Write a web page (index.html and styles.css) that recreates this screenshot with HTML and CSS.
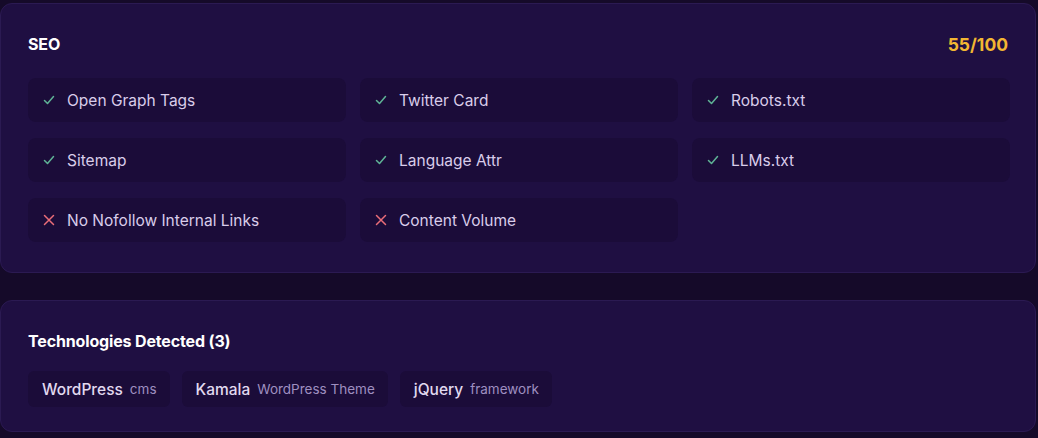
FILE: index.html
```html
<!DOCTYPE html>
<html>
<head>
<meta charset="utf-8">
<link rel="stylesheet" href="styles.css">
</head>
<body>
<div class="page">
  <section class="card">
    <div class="card-head">
      <h2 class="title">SEO</h2>
      <span class="score">55/100</span>
    </div>
    <div class="checks">
      <div class="check"><svg class="ic ok" viewBox="0 0 12 12"><path d="M1.5 6.5 L4.5 9.5 L10.5 2.5"/></svg><span>Open Graph Tags</span></div>
      <div class="check"><svg class="ic ok" viewBox="0 0 12 12"><path d="M1.5 6.5 L4.5 9.5 L10.5 2.5"/></svg><span>Twitter Card</span></div>
      <div class="check"><svg class="ic ok" viewBox="0 0 12 12"><path d="M1.5 6.5 L4.5 9.5 L10.5 2.5"/></svg><span>Robots.txt</span></div>
      <div class="check"><svg class="ic ok" viewBox="0 0 12 12"><path d="M1.5 6.5 L4.5 9.5 L10.5 2.5"/></svg><span>Sitemap</span></div>
      <div class="check"><svg class="ic ok" viewBox="0 0 12 12"><path d="M1.5 6.5 L4.5 9.5 L10.5 2.5"/></svg><span>Language Attr</span></div>
      <div class="check"><svg class="ic ok" viewBox="0 0 12 12"><path d="M1.5 6.5 L4.5 9.5 L10.5 2.5"/></svg><span>LLMs.txt</span></div>
      <div class="check"><svg class="ic bad" viewBox="0 0 12 12"><path d="M1.5 1.5 L10.5 10.5 M10.5 1.5 L1.5 10.5"/></svg><span>No Nofollow Internal Links</span></div>
      <div class="check"><svg class="ic bad" viewBox="0 0 12 12"><path d="M1.5 1.5 L10.5 10.5 M10.5 1.5 L1.5 10.5"/></svg><span>Content Volume</span></div>
    </div>
  </section>
  <section class="card card-tech">
    <h2 class="title">Technologies Detected (3)</h2>
    <div class="tags">
      <div class="tag"><span class="tag-name">WordPress</span><span class="tag-type">cms</span></div>
      <div class="tag"><span class="tag-name">Kamala</span><span class="tag-type">WordPress Theme</span></div>
      <div class="tag"><span class="tag-name">jQuery</span><span class="tag-type">framework</span></div>
    </div>
  </section>
</div>
</body>
</html>
```
FILE: styles.css
```css
* { box-sizing: border-box; }
html, body { margin: 0; padding: 0; background: #150a29; }
body {
  font-family: Inter, "Noto Sans", "Liberation Sans", sans-serif;
  width: 1038px;
  height: 438px;
  overflow: hidden;
}
.page {
  padding: 3px 2px 0 0;
  display: flex;
  flex-direction: column;
  gap: 27px;
}
.card {
  background: #1f0f42;
  border: 1px solid #2b1a52;
  border-radius: 12px;
  padding: 30px 27px 30px 27px;
}
.card-tech { padding-bottom: 24px; }
.card-head {
  display: flex;
  justify-content: space-between;
  align-items: center;
  height: 20px;
  margin-bottom: 24px;
}
.title {
  margin: 0;
  font-size: 16px;
  line-height: 20px;
  font-weight: 700;
  letter-spacing: -0.15px;
  color: #ffffff;
}
.score {
  font-size: 17.5px;
  font-weight: 700;
  color: #f2b632;
}
.checks {
  display: grid;
  grid-template-columns: repeat(3, 318px);
  column-gap: 14px;
  row-gap: 16px;
}
.check {
  height: 44px;
  background: #1b0c39;
  border-radius: 8px;
  display: flex;
  align-items: center;
  gap: 12px;
  padding-left: 15px;
  font-size: 15.5px;
  color: #d9cdea;
}
.ic {
  width: 12px;
  height: 12px;
  fill: none;
  stroke-width: 1.5;
  stroke-linecap: round;
  stroke-linejoin: round;
  flex: none;
}
.ok { stroke: #5fb396; }
.bad { stroke: #ea6d78; }
.card-tech .title { margin-bottom: 20px; }
.tags {
  display: flex;
  gap: 12px;
}
.tag {
  height: 36px;
  background: #1b0c39;
  border-radius: 6px;
  display: flex;
  align-items: center;
  gap: 7px;
  padding: 0 13px 0 14px;
}
.tag-name {
  font-size: 15.5px;
  font-weight: 500;
  color: #e2daf0;
}
.tag-type {
  font-size: 13.5px;
  color: #9f8fc0;
}
```
